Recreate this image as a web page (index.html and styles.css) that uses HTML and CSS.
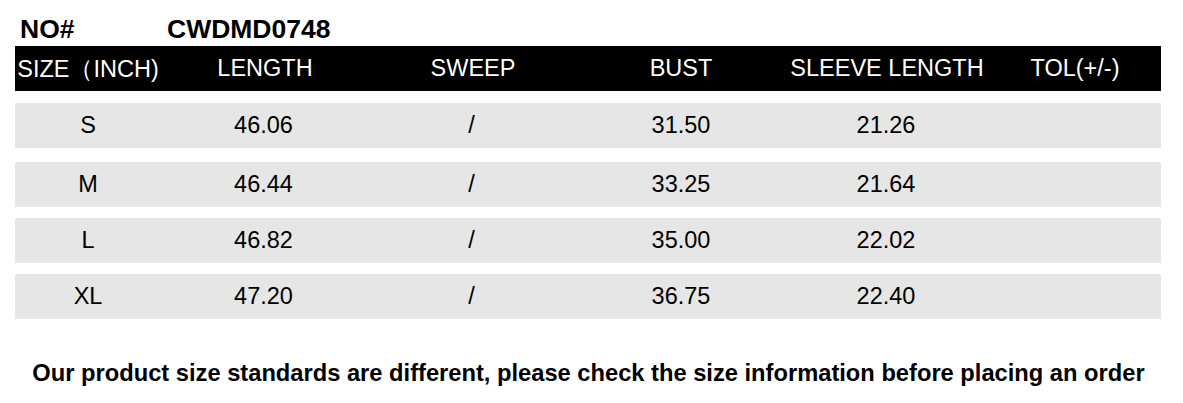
FILE: index.html
```html
<!DOCTYPE html>
<html lang="en">
<head>
<meta charset="utf-8">
<title>CWDMD0748 size chart</title>
<link rel="stylesheet" href="styles.css">
</head>
<body>
<div class="page">
  <div class="title">
    <span class="title-label">NO#</span>
    <span class="title-code">CWDMD0748</span>
  </div>
  <div class="chart">
    <div class="row head">
      <div class="cell">SIZE（INCH)</div>
      <div class="cell">LENGTH</div>
      <div class="cell">SWEEP</div>
      <div class="cell">BUST</div>
      <div class="cell">SLEEVE LENGTH</div>
      <div class="cell">TOL(+/-)</div>
    </div>
    <div class="row">
      <div class="cell">S</div>
      <div class="cell">46.06</div>
      <div class="cell">/</div>
      <div class="cell">31.50</div>
      <div class="cell">21.26</div>
      <div class="cell"></div>
    </div>
    <div class="row">
      <div class="cell">M</div>
      <div class="cell">46.44</div>
      <div class="cell">/</div>
      <div class="cell">33.25</div>
      <div class="cell">21.64</div>
      <div class="cell"></div>
    </div>
    <div class="row">
      <div class="cell">L</div>
      <div class="cell">46.82</div>
      <div class="cell">/</div>
      <div class="cell">35.00</div>
      <div class="cell">22.02</div>
      <div class="cell"></div>
    </div>
    <div class="row">
      <div class="cell">XL</div>
      <div class="cell">47.20</div>
      <div class="cell">/</div>
      <div class="cell">36.75</div>
      <div class="cell">22.40</div>
      <div class="cell"></div>
    </div>
  </div>
  <p class="note">Our product size standards are different, please check the size information before placing an order</p>
</div>
</body>
</html>
```

FILE: styles.css
```css
html, body {
  margin: 0;
  padding: 0;
  background: #ffffff;
}

.page {
  width: 1183px;
  height: 403px;
  font-family: "Liberation Sans", Arial, sans-serif;
  color: #000000;
  overflow: hidden;
}

.title {
  display: flex;
  align-items: baseline;
  padding: 15px 0 0 20px;
  box-sizing: border-box;
  font-weight: bold;
  font-size: 26.5px;
  line-height: 28px;
  height: 46px;
}

.title-label {
  width: 147px;
}

.chart {
  margin: 0 15px;
  width: 1146px;
  display: flex;
  flex-direction: column;
  gap: 11px;
}

.row {
  display: grid;
  grid-template-columns: 146px 205px 211px 208px 202px 174px;
  height: 45px;
  align-items: center;
  background: #e6e6e6;
  font-size: 23.5px;
}

.row.head {
  grid-template-columns: 146px 208px 208px 208px 204px 172px;
  background: #000000;
  color: #ffffff;
  font-size: 23.5px;
}

.row:nth-child(2) {
  margin-top: 1px;
}

.row:nth-child(3) {
  margin-top: 3px;
}

.cell {
  text-align: center;
  white-space: nowrap;
}

.note {
  margin: 40px 0 0;
  text-align: center;
  font-weight: bold;
  font-size: 23.7px;
  line-height: 28px;
  padding-right: 6px;
}
```
